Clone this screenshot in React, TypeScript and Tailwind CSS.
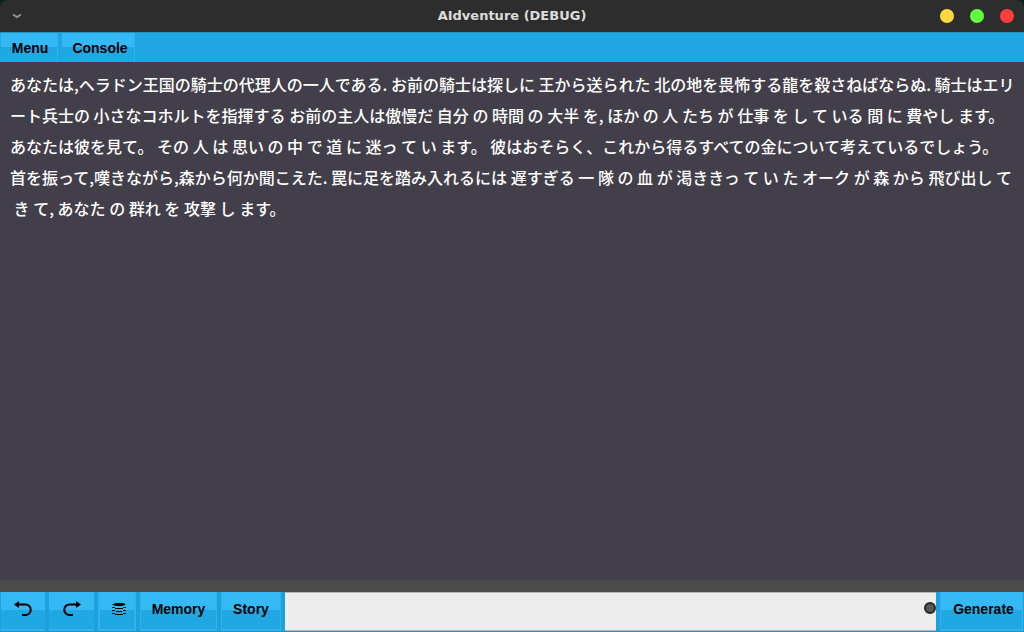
import type { ReactNode } from "react";
import clsx from "clsx";

const storyLines = [
  "あなたは,ヘラドン王国の騎士の代理人の一人である. お前の騎士は探しに 王から送られた 北の地を畏怖する龍を殺さねばならぬ. 騎士はエリ",
  "ート兵士の 小さなコホルトを指揮する お前の主人は傲慢だ 自分 の 時間 の 大半 を, ほか の 人 たち が 仕事 を し て いる 間 に 費やし ます。",
  "あなたは彼を見て。 その 人 は 思い の 中 で 道 に 迷っ て い ます。 彼はおそらく、これから得るすべての金について考えているでしょう。",
  "首を振って,嘆きながら,森から何か聞こえた. 罠に足を踏み入れるには 遅すぎる 一 隊 の 血 が 渇ききっ て い た オーク が 森 から 飛び出し て",
  " き て, あなた の 群れ を 攻撃 し ます。",
];

type BarButtonProps = {
  className: string;
  label?: string;
  children: ReactNode;
};

const BarButton = ({ className, label, children }: BarButtonProps) => (
  <button
    type="button"
    aria-label={label}
    className={clsx(
      "flex shrink-0 items-center justify-center border-[#2fb4ef] bg-linear-to-b from-[#35b9f5] from-50% to-[#20a8e2] to-50% font-['Liberation_Sans',sans-serif] text-sm font-bold text-black",
      className
    )}
  >
    {children}
  </button>
);

const UndoIcon = ({ className }: { className?: string }) => (
  <svg width="18" height="16" viewBox="0 0 18 16" fill="none" className={className} aria-hidden="true">
    <path d="M4 3.500h7.500a5 5 0 0 1 0 10.500H8" stroke="black" strokeWidth="2" />
    <path d="M0 3.500L5 0v7z" fill="black" />
  </svg>
);

const LayersIcon = () => (
  <svg width="16" height="14" viewBox="0 0 16 14" fill="none" aria-hidden="true">
    <path d="M1 2.500L5 1h7l3 1.500L11 4H5z" fill="black" />
    <path
      d="M1 5.500h3M4 6.500h8M12 5.500h3M1 8.500h3M5 9.500h6M12 8.500h3M1 11.500h3M4 12.500h8M12 11.500h3"
      stroke="black"
    />
  </svg>
);

const TitleBar = () => (
  <header className="relative flex h-8 shrink-0 items-center justify-between overflow-hidden rounded-t-lg bg-[#2d2d2d] pr-2.5 pl-3">
    <button type="button" aria-label="Window menu">
      <svg width="10" height="6" viewBox="0 0 10 6" fill="none" aria-hidden="true">
        <path d="M1 1.500l4 2.500 4-2.500" stroke="#929292" strokeWidth="2" />
      </svg>
    </button>
    <h1 className="pointer-events-none absolute inset-x-0 text-center font-['DejaVu_Sans',sans-serif] text-[13px] font-bold text-[#dcdcdc]">
      AIdventure (DEBUG)
    </h1>
    <div className="flex gap-4">
      <button type="button" aria-label="Minimize" className="size-3.5 rounded-full bg-[#ffd83d]" />
      <button type="button" aria-label="Maximize" className="size-3.5 rounded-full bg-[#62ff3d]" />
      <button type="button" aria-label="Close" className="size-3.5 rounded-full bg-[#ff3f3d]" />
    </div>
  </header>
);

export default function App() {
  return (
    <div className="flex min-h-screen flex-col bg-[#433f4a]">
      <div className="bg-[#06230c]">
        <TitleBar />
      </div>

      {/* Menu bar */}
      <nav className="flex h-[30px] shrink-0 gap-1 border-t border-[#2492c4] bg-[#20a7e1] pl-px">
        <BarButton className="w-[57px] border-r pl-0.5">Menu</BarButton>
        <BarButton className="w-[73px] border-r pl-1">Console</BarButton>
      </nav>

      {/* Story text */}
      <main className="grow overflow-hidden pt-[7px] pl-2.5">
        <p
          lang="ja"
          className="font-['Noto_Sans_CJK_JP',sans-serif] text-base leading-[31px] font-medium whitespace-pre text-white"
        >
          {storyLines.join("\n")}
        </p>
      </main>

      <div className="h-3 shrink-0 bg-[#4b4b4b]" />

      {/* Input bar */}
      <form className="flex h-10 shrink-0 gap-1 border-b border-[#2492c4] bg-[#20a0d8] pr-px pl-px">
        <BarButton className="w-11 border-b-2 pb-1" label="Undo">
          <UndoIcon />
        </BarButton>
        <BarButton className="w-[45px] border-b-2 pb-1" label="Redo">
          <UndoIcon className="-scale-x-100" />
        </BarButton>
        <BarButton className="w-[38px] border-x-2 border-b-2 pb-1 pl-1" label="Layers">
          <LayersIcon />
        </BarButton>
        <BarButton className="w-[77px] border-x border-b-2 pb-1">Memory</BarButton>
        <BarButton className="w-[60px] border-x border-b-2 pb-1">Story</BarButton>
        <div className="relative flex min-w-0 grow">
          <input
            type="text"
            aria-label="Story input"
            className="w-full border-y border-[#b5b5b5] bg-[#ededed] px-2 font-['Liberation_Sans',sans-serif] text-sm text-black outline-none"
          />
          <span className="absolute top-2.5 right-0 size-3 rounded-full border-2 border-[#252525] bg-[#57575a]" />
        </div>
        <BarButton className="w-[83px] border-x border-b-2 pb-1 pl-1">Generate</BarButton>
      </form>
    </div>
  );
}
